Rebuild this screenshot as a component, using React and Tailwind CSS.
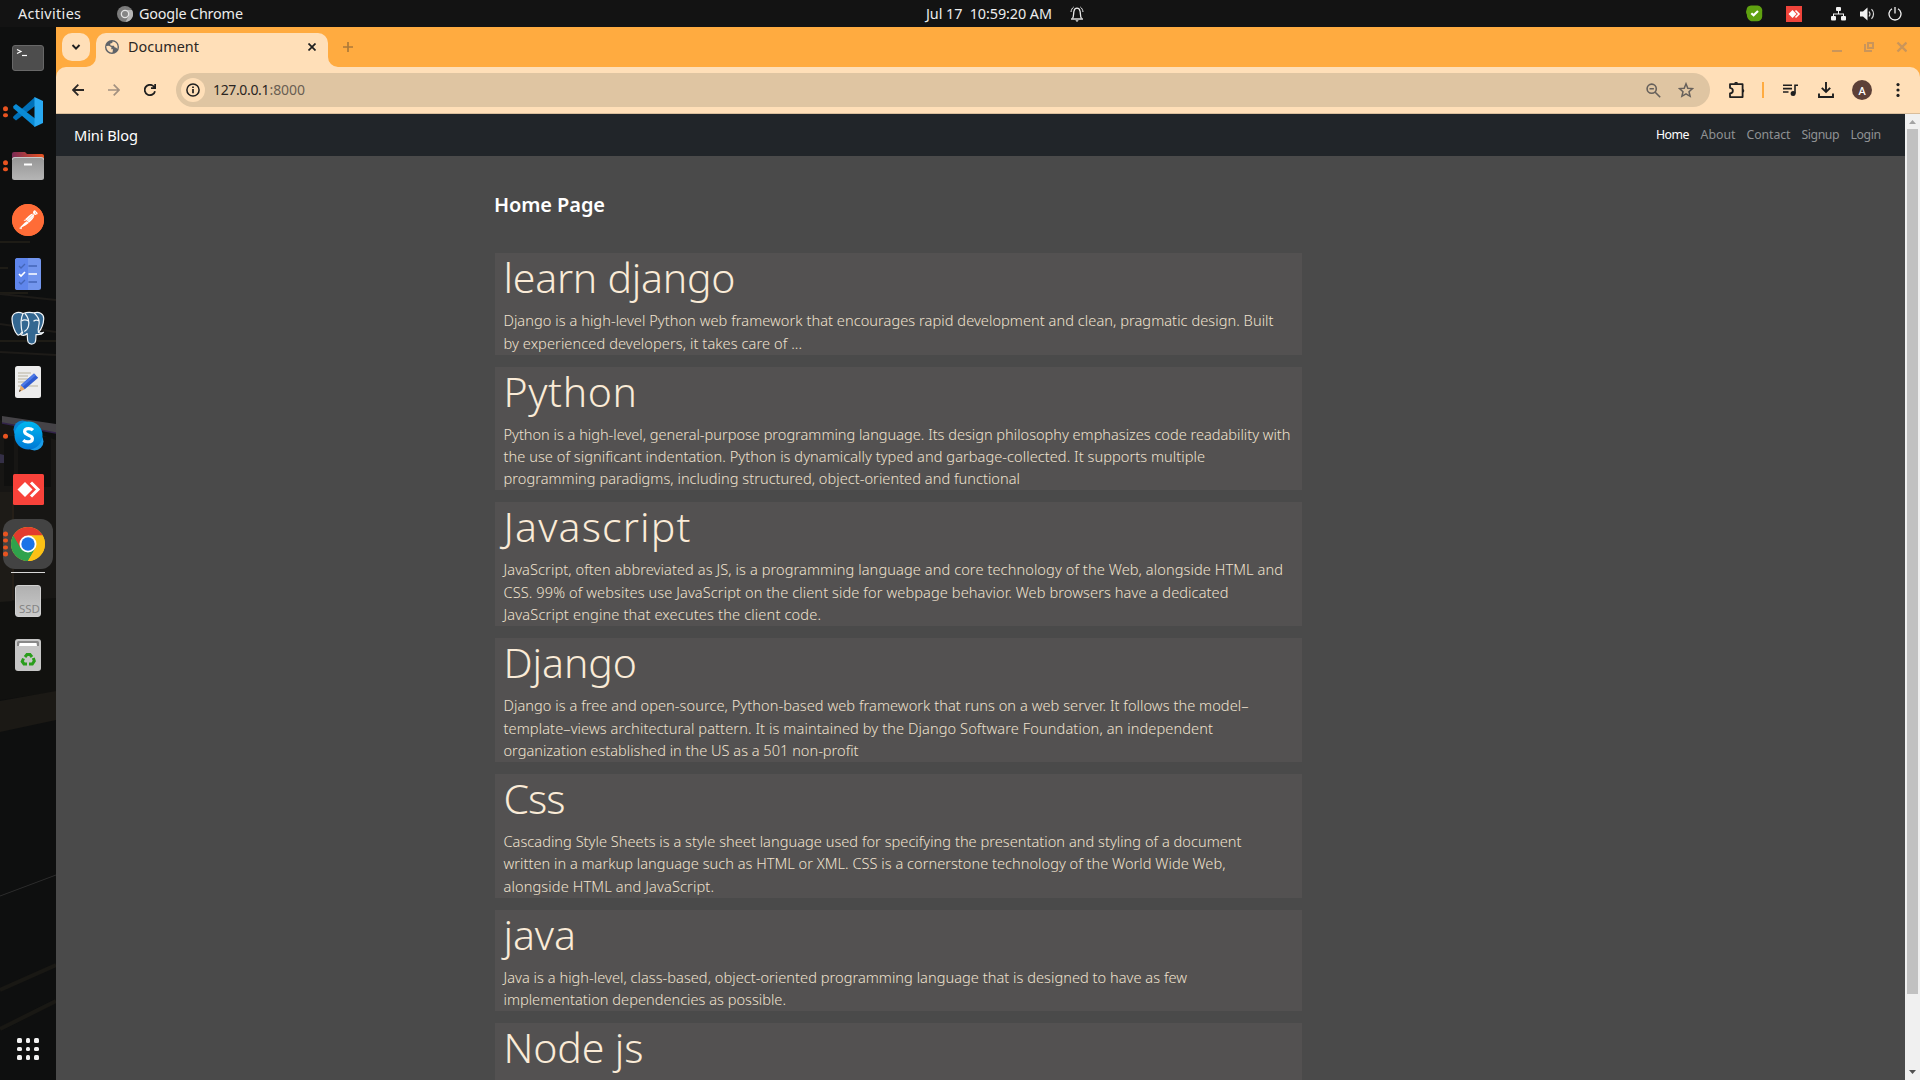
import { useLayoutEffect, useRef } from "react";
import { SiPostman } from "react-icons/si";

/* A single line of text whose tracking is computed so that it spans `w` pixels. */
function Line({ w, className = "", children }) {
  const ref = useRef(null);
  useLayoutEffect(() => {
    const el = ref.current;
    const fit = () => {
      el.style.letterSpacing = "0px";
      const natural = el.getBoundingClientRect().width;
      el.style.letterSpacing = (w - natural) / Math.max(1, children.length - 1) + "px";
    };
    fit();
    document.fonts.ready.then(fit);
  }, [w, children]);
  return (
    <span className={"block whitespace-pre " + className} style={{ width: w }}>
      <span ref={ref}>{children}</span>
    </span>
  );
}

const posts = [
  { title: ["learn django", 232], lines: [["Django is a high-level Python web framework that encourages rapid development and clean, pragmatic design. Built", 770], ["by experienced developers, it takes care of ...", 298.5]] },
  { title: ["Python", 133.5], lines: [["Python is a high-level, general-purpose programming language. Its design philosophy emphasizes code readability with", 787], ["the use of significant indentation. Python is dynamically typed and garbage-collected. It supports multiple", 701.5], ["programming paradigms, including structured, object-oriented and functional", 516.5]] },
  { title: ["Javascript", 187], lines: [["JavaScript, often abbreviated as JS, is a programming language and core technology of the Web, alongside HTML and", 779.5], ["CSS. 99% of websites use JavaScript on the client side for webpage behavior. Web browsers have a dedicated", 725], ["JavaScript engine that executes the client code.", 317.5]] },
  { title: ["Django", 133.5], lines: [["Django is a free and open-source, Python-based web framework that runs on a web server. It follows the model–", 745], ["template–views architectural pattern. It is maintained by the Django Software Foundation, an independent", 709.5], ["organization established in the US as a 501 non-profit", 355]] },
  { title: ["Css", 62], lines: [["Cascading Style Sheets is a style sheet language used for specifying the presentation and styling of a document", 738], ["written in a markup language such as HTML or XML. CSS is a cornerstone technology of the World Wide Web,", 722], ["alongside HTML and JavaScript.", 210.5]] },
  { title: ["java", 72.5], lines: [["Java is a high-level, class-based, object-oriented programming language that is designed to have as few", 683.5], ["implementation dependencies as possible.", 282.5]] },
  { title: ["Node js", 140], lines: [] },
];

function TopBar() {
  return (
    <header className="grid h-[27px] shrink-0 grid-cols-[926px_1fr_auto] items-center bg-[#131313] text-[14.4px] leading-[26px] text-[#ececec]">
      <div className="flex items-center pl-[18px]">
        <Line w={63}>Activities</Line>
        <svg className="ml-[36px] size-4" viewBox="0 0 16 16">
          <circle cx="8" cy="8" r="8" fill="#7c7c7c" />
          <path d="M8 4h7A8 8 0 0 1 8.500 16l3.200-6z" fill="#b5b5b5" />
          <circle cx="8" cy="8" r="4.300" fill="#e4e4e4" />
          <circle cx="8" cy="8" r="3" fill="#858585" />
        </svg>
        <Line w={104} className="ml-[6px]">Google Chrome</Line>
      </div>
      <div className="flex items-center">
        <Line w={126}>{"Jul 17  10:59:20 AM"}</Line>
        <svg className="ml-[18px] h-4 w-[14px]" viewBox="0 0 14 16" fill="none" stroke="#e8e8e8">
          <path d="M2.500 12.500C4 10.500 3.300 7.500 4 5 4.500 3 5.700 2.200 7 2.200S9.500 3 10 5c.7 2.500 0 5.500 1.500 7.500" strokeWidth="1.300" />
          <path d="M1 13h12" strokeWidth="1.400" />
          <path d="M5.300 14.200h3.400L7 16z" fill="#e8e8e8" stroke="none" />
          <path d="M3.700 1C2 2.200 1.200 4 1 6M10.300 1C12 2.200 12.800 4 13 6" strokeWidth="1" />
        </svg>
      </div>
      <div className="flex items-center pr-[18px]">
        <svg className="size-[17px]" viewBox="0 0 17 17">
          <path d="M5 .5h6.500a5 5 0 0 1 4.700 6v5A5 5 0 0 1 11 16.300H6.500C3 16 .8 13 .9 9.700A5 5 0 0 1 .5 5 4.800 4.800 0 0 1 5 .5z" fill="#5fa110" />
          <path d="M5.300 8.200 7.600 10.300 12 6" fill="none" stroke="#fff" strokeWidth="2.200" />
        </svg>
        <svg className="ml-[23px] size-4" viewBox="0 0 16 16">
          <path d="M0 0h16v16H0z" fill="#ef443b" />
          <path d="M6.500 4 10.500 8l-4 4-4-4z" fill="#fff" />
          <path d="M9.500 4.500 13 8l-3.500 3.500" fill="none" stroke="#fff" strokeWidth="1.600" />
        </svg>
        <svg className="ml-[29px] h-[14px] w-[15px]" viewBox="0 0 15 14" fill="#f2f2f2">
          <rect x="5" y="0" width="5" height="4" rx="1" /><rect x="0" y="9" width="5" height="4.500" rx="1" /><rect x="10" y="9" width="5" height="4.500" rx="1" />
          <path d="M7 4h1v2.500h5V9h-1V7.500H3V9H2V6.500h5z" />
        </svg>
        <svg className="ml-[14px] h-[14px] w-[15px]" viewBox="0 0 15 14">
          <path d="M0 4.500h3L7.500.5v13L3 9.500H0z" fill="#f2f2f2" />
          <path d="M9 4.500c1.200 1.500 1.200 3.500 0 5M11.500 2.200c2.700 2.800 2.700 6.800 0 9.600" fill="none" stroke="#d8d8d8" strokeWidth="1.200" />
        </svg>
        <svg className="ml-[13px] h-[14px] w-[14px]" viewBox="0 0 14 14" fill="none" stroke="#f2f2f2" strokeWidth="1.300">
          <path d="M4 1.800a6 6 0 1 0 6 0M7 0v6.500" />
        </svg>
      </div>
    </header>
  );
}

function DockItem({ dots = 0, children }) {
  return (
    <div className="relative flex h-[54px] w-14 items-center justify-center">
      {children}
      {dots > 0 && (
        <div className="absolute top-1/2 left-[3px] flex -translate-y-1/2 flex-col gap-[2.300px]">
          {Array.from({ length: dots }, (_, i) => (
            <i key={i} className="block size-[4.500px] rounded-full bg-[#e95420]" />
          ))}
        </div>
      )}
    </div>
  );
}

function Dock() {
  return (
    <aside className="relative flex w-14 shrink-0 flex-col overflow-hidden bg-[#0e0f0f] pt-1">
      {/* wallpaper showing through the dock */}
      <svg className="absolute inset-0 h-full w-full" viewBox="0 27 56 1053" preserveAspectRatio="none">
        <path d="M0 560 0 420 56 440V600L0 604z" fill="#171614" />
        <path d="M0 242h30M0 268h8M0 293h28M0 341h56" stroke="#25221a" strokeWidth="1.500" />
        <path d="M0 294 56 300M0 324l56 8M0 352l56 3" stroke="#1d1b18" strokeWidth="2" />
        <path d="M2 416 56 424v9L2 423z" fill="#454347" />
        <path d="M2 423 56 433" stroke="#32234a" strokeWidth="1.500" />
        <path d="M0 454 4 455v8H0z" fill="#342f46" />
        <path d="M4 436h10v50H4zM18 437h33v50H18z" fill="#10100f" />
        <path d="M0 492h12v110H0z" fill="#1d1b17" />
        <path d="M13 500v100" stroke="#34291d" strokeWidth="1" />
        <path d="M0 602 56 598V692L0 700z" fill="#11110f" />
        <path d="M0 701 56 691v29L0 732z" fill="#1b1915" />
        <path d="M0 896 56 875" stroke="#333" strokeWidth=".8" />
        <path d="M0 990 56 965M0 1029l56-28" stroke="#191814" strokeWidth="4" />
      </svg>

      <DockItem>
        <svg className="h-[26px] w-8" viewBox="0 0 32 26">
          <rect x=".5" y=".5" width="31" height="25" rx="2.500" fill="#4d4d4d" stroke="#686868" />
          <path d="m5 4.500 4 2-4 2" fill="none" stroke="#fff" strokeWidth="1.200" />
          <path d="M10 10.500h5" stroke="#fff" strokeWidth="1.200" />
        </svg>
      </DockItem>
      <DockItem dots={2}>
        <svg className="size-8" viewBox="0 0 32 32">
          <path d="M1.300 20.500 23 1v9L4 24.500 1 22z" fill="#0070b8" />
          <path d="M1.300 12.300 23 31v-8.500L4 8 1.200 10.300z" fill="#0a8bd6" />
          <path d="M22.500 1 31 5v22l-8.500 4z" fill="#29a9f2" />
        </svg>
      </DockItem>
      <DockItem dots={2}>
        <svg className="h-7 w-8" viewBox="0 0 32 28">
          <defs>
            <linearGradient id="folderBack"><stop stopColor="#7b2a55" /><stop offset="1" stopColor="#e95420" /></linearGradient>
            <linearGradient id="folderFront" x2="0" y2="1"><stop stopColor="#959595" /><stop offset="1" stopColor="#b5b5b5" /></linearGradient>
          </defs>
          <path d="M0 10V2a2 2 0 0 1 2-2h11l2 2h15a2 2 0 0 1 2 2v6z" fill="url(#folderBack)" />
          <rect y="5" width="32" height="23" rx="2.500" fill="url(#folderFront)" />
          <path d="M0 8a3 3 0 0 1 3-2.500h26A3 3 0 0 1 32 8" fill="none" stroke="#c9c9c9" />
          <path d="M12 12.500h8" stroke="#fff" strokeWidth="2" />
        </svg>
      </DockItem>
      <DockItem>
        <div className="grid size-8 place-items-center rounded-full bg-[radial-gradient(#fff_50%,#ff6c37_55%)]">
          <SiPostman className="size-8 text-[#ff6c37]" />
        </div>
      </DockItem>
      <DockItem>
        <svg className="h-8 w-[26px]" viewBox="0 0 26 32" fill="none">
          <rect width="26" height="32" rx="2.500" fill="#7396ee" />
          <path d="M0 3a3 3 0 0 1 3-3h10v32H3a3 3 0 0 1-3-3z" fill="#5f86ec" />
          <path d="m4 8 2 2 4-4M4 24l2 2 4-4M13.500 8H22M13.500 24H22" stroke="#4466b8" strokeWidth="1.300" />
          <path d="m4 16 2 2 4-4M13.500 16H22" stroke="#fff" strokeWidth="1.700" />
        </svg>
      </DockItem>
      <DockItem>
        <svg className="h-[34px] w-[34px]" viewBox="0 0 34 34" fill="#336791" stroke="#f2f6f9" strokeWidth="1.200" strokeLinejoin="round">
          <path d="M12 2.500C7 .3 1 1.500 1 8c0 5 2.500 13 5.500 15.800 1.600 1.200 3-.8 4.300-2.500l3 1 .5-18z" />
          <path d="M12 2.500c4-1.500 8-1.300 11-.6 5.500-1.600 10 1.200 9.700 6C32.500 13 29.500 19 27.500 21.500c1.700.6 3.500.3 5-.2-1.500 2-4.500 2.600-7.500 2.200 0 3 0 6-1 8-1.300 2-5.500 2.200-6.800-.2-1-2-.8-5.500-1-8.800-1.500 1.700-4.200 2.200-6.500 1.300l2-2c-1.800-3-1.300-7.500-1.700-11 .2-3.300 1-6.300 2-8.300z" />
          <path d="M14 2.500c3 3.500 4.500 8 3.500 12.500-.4 2.500-2.500 4.500-4.200 5.500M23.200 2c3.200 3 5.300 7.500 5 10-.3 3.500-1.700 6-.7 9.500M10.500 10c2-1.500 5-1.200 7 0M22.500 10.300c1.500-1.200 4-1.300 5.500-.3" fill="none" />
        </svg>
      </DockItem>
      <DockItem>
        <svg className="h-8 w-[26px]" viewBox="0 0 26 32">
          <rect width="26" height="32" rx="2.500" fill="#ececec" />
          <path d="M3 7h13M3 10h10M3 13h16M3 16h12M3 20h20" stroke="#c9c5b8" strokeWidth="1.300" />
          <path d="m4 26 2-7 3.800 4.200z" fill="#e8a965" />
          <path d="M6 19 19 7.500l4.200 4.200L9.800 23.200z" fill="#2f5bd0" />
          <path d="m6 19 13-11.500 1.800 1.800L7.500 21z" fill="#4f7ae6" />
          <path d="m4 26 .7-2.500L6 24.700z" fill="#333" />
        </svg>
      </DockItem>
      <DockItem dots={1}>
        <svg className="mb-px size-[31px]" viewBox="0 0 31 31">
          <defs><linearGradient id="sky" x2="0" y2="1"><stop stopColor="#00b7f0" /><stop offset="1" stopColor="#0078d4" /></linearGradient></defs>
          <circle cx="9.500" cy="9.500" r="9" fill="#0a84d0" />
          <circle cx="21.500" cy="21.500" r="9" fill="#1a9be8" />
          <circle cx="15.500" cy="15.500" r="14" fill="url(#sky)" />
          <path d="M20 10.200c-1-1-2.600-1.600-4.500-1.600-2.300 0-3.900 1.100-3.900 3 0 4.300 7.800 2.800 7.800 6.800 0 2.100-1.800 3.500-4.400 3.500-2 0-3.600-.6-4.800-1.700" fill="none" stroke="#fff" strokeWidth="3.200" />
        </svg>
      </DockItem>
      <DockItem>
        <svg className="mb-px size-[31px]" viewBox="0 0 31 31">
          <rect width="31" height="31" rx="1.500" fill="#f8423a" />
          <path d="m12 8 7.500 7.500L12 23l-7.500-7.500z" fill="#fff" />
          <path d="m18 8.500 7 7-7 7" fill="none" stroke="#fff" strokeWidth="3" />
        </svg>
      </DockItem>
      <DockItem dots={4}>
        <div className="grid size-[50px] place-items-center rounded-[12px] bg-[#434343]">
          <svg className="size-[34px]" viewBox="0 0 34 34">
            <circle cx="17" cy="17" r="17" fill="#fbc116" />
            <path d="M17 17 2.300 8.500A17 17 0 0 0 17 34l7.400-12.800z" fill="#2fa24c" />
            <path d="M17 8.500h14.700A17 17 0 0 0 2.300 8.500l7.400 12.800z" fill="#e33b2e" />
            <path d="M17 8.500h14.700A17 17 0 0 1 17 34l7.400-12.800z" fill="#fbc116" />
            <circle cx="17" cy="17" r="8.500" fill="#fff" />
            <circle cx="17" cy="17" r="6.700" fill="#1a73e8" />
          </svg>
        </div>
      </DockItem>
      <div className="relative mt-px mb-px ml-[11px] h-px w-[34px] bg-[#d8d8d8]" />
      <DockItem>
        <div className="flex h-8 w-[26px] items-end justify-end rounded-[3px] border border-[#d0d0d0] bg-linear-to-b from-[#b0b0b0] to-[#cacaca]">
          <Line w={21} className="text-[11.500px] leading-[15px] text-[#858585]">SSD</Line>
        </div>
      </DockItem>
      <DockItem>
        <svg className="h-8 w-[26px]" viewBox="0 0 26 32">
          <rect width="26" height="32" rx="3" fill="#c6c6c6" />
          <path d="M2 7V3.500A1.500 1.500 0 0 1 3.500 2h19A1.500 1.500 0 0 1 24 3.500V7" fill="#888" />
          <path d="M4 7 4.500 4h17L22 7z" fill="#fff" />
          <g fill="none" stroke="#2a9d1c" strokeWidth="3">
            <path d="m10 18 2-2.500h3l2 2.500" /><path d="m18.300 19 1 3-2 3H14" /><path d="M12 25H9l-1.800-2.500L8.500 19.500" />
          </g>
        </svg>
      </DockItem>
      <div className="relative mt-auto mb-5 ml-[17px] grid w-[22px] grid-cols-3 gap-[4px]">
        {Array.from({ length: 9 }, (_, i) => (
          <i key={i} className="block size-[4.700px] rounded-[1.500px] bg-[#f2f2f2]" />
        ))}
      </div>
    </aside>
  );
}

function TabStrip() {
  return (
    <div className="flex h-10 shrink-0 items-start bg-[#ffab40] pt-[6px] pl-[6px]">
      <div className="grid size-7 place-items-center rounded-[10px] bg-[#ffdfb8]">
        <svg className="size-2.5" viewBox="0 0 10 10" fill="none" stroke="#1f1f1f" strokeWidth="1.900"><path d="m1.500 3 3.500 3.700L8.500 3" /></svg>
      </div>
      <div className="relative ml-[6px] flex h-[34px] w-[232px] items-start rounded-t-[10px] bg-[#ffdfb8] pl-[9px]">
        <svg className="absolute bottom-0 -left-2.5 size-2.5" viewBox="0 0 10 10"><path d="M10 0v10H0A10 10 0 0 0 10 0z" fill="#ffdfb8" /></svg>
        <svg className="absolute -right-2.5 bottom-0 size-2.5" viewBox="0 0 10 10"><path d="M0 0v10h10A10 10 0 0 1 0 0z" fill="#ffdfb8" /></svg>
        <svg className="mt-[7px] size-[14px]" viewBox="0 0 14 14">
          <circle cx="7" cy="7" r="7" fill="#5f6368" />
          <path d="M1.300 6 4 5.800l2.500 1.500-.3 2H8l-.5 3.200c-3.400.2-6.200-2.500-6.200-6.500zM7.500 1.400 7.300 3l-2 .5v1.700L7 5.700l2 .1.500 1.500 1.800.5 1 1.200C13.500 5.500 11.500 1.700 7.500 1.400z" fill="#ffdfb8" />
        </svg>
        <Line w={71} className="ml-[9px] text-[14.400px] leading-7 text-[#2b2623]">Document</Line>
        <svg className="mt-[10px] ml-[109px] size-2" viewBox="0 0 8 8" stroke="#1f1f1f" strokeWidth="1.700"><path d="m.5.5 7 7M7.500.5l-7 7" /></svg>
      </div>
      <svg className="mt-[9px] ml-[15px] size-[10px]" viewBox="0 0 10 10" stroke="#ae7a38" strokeWidth="1.700"><path d="M5 0v10M0 5h10" /></svg>
      <svg className="mt-[8px] mr-[13px] ml-auto h-3 w-[75px]" viewBox="0 0 75 12" fill="none" stroke="#ca955a">
        <path d="M0 10h10" strokeWidth="2" />
        <path d="M36 2h5v5h-5z" strokeWidth="2" />
        <path d="M33 3v7h7" strokeWidth="2" />
        <path d="m65.500 1.500 9 9M74.500 1.500l-9 9" strokeWidth="2.400" />
      </svg>
    </div>
  );
}

function Toolbar() {
  return (
    <div className="shrink-0 bg-[#ffab40]">
      <div className="flex h-[47px] items-center rounded-t-[10px] border-b border-[#d9bd9b] bg-[#ffdfb8] pr-[20px] pl-[16px]">
        <svg className="size-3" viewBox="0 0 12 12" fill="none" stroke="#2b2725" strokeWidth="1.800"><path d="M12 6H1.200M6.300.7 1 6l5.300 5.300" /></svg>
        <svg className="ml-6 size-3" viewBox="0 0 12 12" fill="none" stroke="#a39180" strokeWidth="1.700"><path d="M0 6h10.800M5.700.7 11 6l-5.300 5.300" /></svg>
        <svg className="ml-6 size-3" viewBox="0 0 12 12" fill="none" stroke="#1f1f1f" strokeWidth="1.800"><path d="M11 7.200A5.200 5.200 0 1 1 9.800 2.500L11 3.800M11.200 0v4.200H7" /></svg>
        <div className="ml-5 flex h-[34px] flex-1 items-center rounded-full bg-[#dfc5a2] pr-4 pl-[5px]">
          <div className="grid size-6 place-items-center rounded-full bg-[#ffdfb8]">
            <svg className="size-[14px]" viewBox="0 0 14 14" fill="none" stroke="#1f1f1f" strokeWidth="1.500"><circle cx="7" cy="7" r="6.100" /><path d="M7 6v4.300M7 3.500V5" strokeWidth="1.700" /></svg>
          </div>
          <div className="ml-[8px] flex text-[14px] leading-[34px]">
            <Line w={56.500} className="text-[#2b2623]">127.0.0.1</Line>
            <Line w={35.500} className="text-[#6a5e52]">:8000</Line>
          </div>
          <svg className="ml-auto size-[15px]" viewBox="0 0 15 15" fill="none" stroke="#66605b" strokeWidth="1.600"><circle cx="5.700" cy="5.700" r="4.600" /><path d="m9.200 9.200 5 5M3.500 5.700h4.400" /></svg>
          <svg className="ml-[17px] size-4" viewBox="0 0 16 16" fill="none" stroke="#66605b" strokeWidth="1.500"><path d="m8 1.800 1.800 4.400 4.700.4L11 9.700l1.100 4.600L8 11.900l-4.100 2.400L5 9.700 1.500 6.600l4.700-.4z" /></svg>
        </div>
        <svg className="ml-[19px] size-4" viewBox="0 0 16 16" fill="none" stroke="#1f1f1f" strokeWidth="1.800"><path d="M1 2.200h12.600v12.900H1v-3.600c3.800-.4 3.800-5.300 0-5.700z" strokeLinejoin="round" /><path d="M5.200 1.800a1.900 1.900 0 0 1 3.800 0zM14 7a1.900 1.900 0 0 1 0 3.600z" fill="#1f1f1f" stroke="none" /></svg>
        <div className="ml-[17px] h-4 w-[2px] bg-[#ffab40]" />
        <svg className="ml-[19px] h-3 w-[15px]" viewBox="0 0 15 12" fill="none" stroke="#1f1f1f" strokeWidth="1.600"><path d="M0 1.200h9M0 4.600h9M0 8h5.500M15 1.200h-3v8.300" /><circle cx="10.100" cy="9.500" r="1.700" fill="#1f1f1f" /></svg>
        <svg className="ml-5 size-4" viewBox="0 0 16 16" fill="none" stroke="#1f1f1f" strokeWidth="1.900"><path d="M8 0v9.500M3.800 5.800 8 10l4.200-4.200M1 11.500V15h14v-3.500" /></svg>
        <div className="ml-[18px] grid size-5 place-items-center rounded-full bg-[#5d4037] text-[11px] leading-none font-medium text-white">A</div>
        <svg className="ml-[24px] h-[14px] w-1" viewBox="0 0 4 14" fill="#1f1f1f"><circle cx="2" cy="1.600" r="1.600" /><circle cx="2" cy="7" r="1.600" /><circle cx="2" cy="12.400" r="1.600" /></svg>
      </div>
    </div>
  );
}

function BlogPage() {
  return (
    <div className="min-w-0 flex-1 overflow-hidden bg-[#4a4a4a]">
      <nav className="flex h-[42px] items-center justify-between bg-[#212529] pr-6 pl-[18px] leading-[42px]">
        <Line w={64} className="text-[14.600px] text-white">Mini Blog</Line>
        <div className="flex gap-[11px] text-[12.300px] text-[#909294]">
          <Line w={33.500} className="text-white">Home</Line>
          <Line w={35}>About</Line>
          <Line w={44}>Contact</Line>
          <Line w={38}>Signup</Line>
          <Line w={30.500}>Login</Line>
        </div>
      </nav>
      <main className="ml-[439px] w-[807px] pt-[36.100px]">
        <Line w={111} className="-ml-px h-[61px] text-[20px] leading-[26px] font-semibold text-white">Home Page</Line>
        <div className="flex flex-col gap-3">
          {posts.map((p) => (
            <article key={p.title[0]} className="min-h-[101.400px] bg-[#535151] pb-[0.600px] pl-[8.500px]">
              <Line w={p.title[1]} className="h-[56px] text-[41px] leading-[48.400px] font-light text-[#faebd7]">{p.title[0]}</Line>
              {p.lines.map(([text, w]) => (
                <Line key={text} w={w} className="text-[14.600px] leading-[22.400px] font-[340] text-[#f0e2cf]">{text}</Line>
              ))}
            </article>
          ))}
        </div>
      </main>
    </div>
  );
}

function Scrollbar() {
  return (
    <div className="flex w-[15px] shrink-0 flex-col items-center bg-[#f0f0f0]">
      <svg className="h-[15px] w-[15px]" viewBox="0 0 15 15"><path d="M4 10 7.500 6 11 10z" fill="#a3a3a3" /></svg>
      <div className="h-[865px] w-[11px] bg-[#c1c1c1]" />
      <svg className="mt-auto h-[15px] w-[15px]" viewBox="0 0 15 15"><path d="M4 5 7.500 9 11 5z" fill="#505050" /></svg>
    </div>
  );
}

export default function App() {
  return (
    <div className="flex h-[1080px] w-[1920px] flex-col overflow-hidden font-['Noto_Sans',sans-serif]">
      <TopBar />
      <div className="flex min-h-0 flex-1">
        <Dock />
        <div className="flex min-w-0 flex-1 flex-col">
          <TabStrip />
          <Toolbar />
          <div className="flex min-h-0 flex-1">
            <BlogPage />
            <Scrollbar />
          </div>
        </div>
      </div>
    </div>
  );
}
